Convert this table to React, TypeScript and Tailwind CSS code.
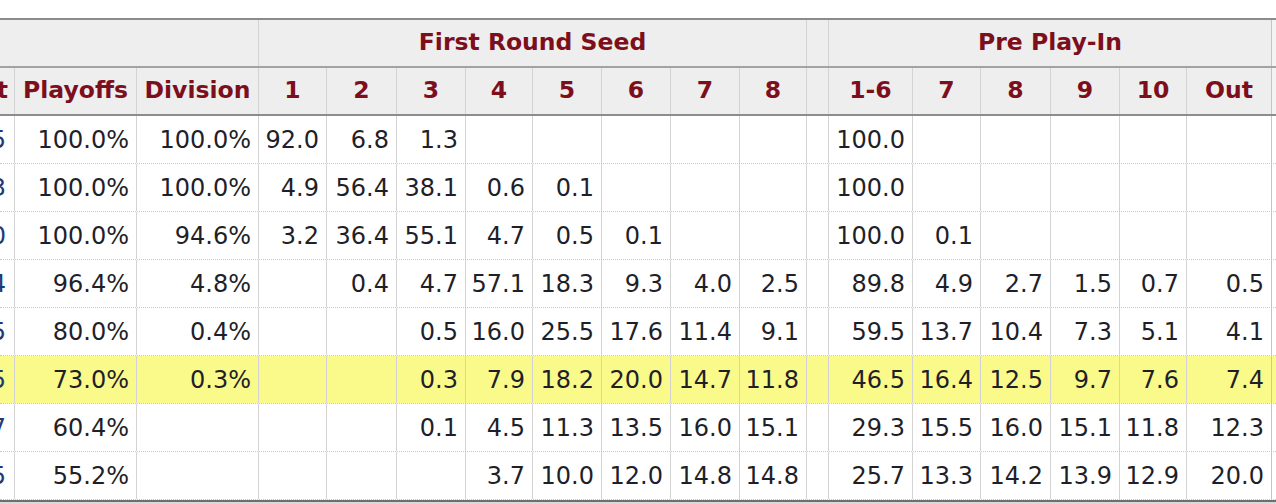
const seedCols = ["1", "2", "3", "4", "5", "6", "7", "8"];
const playInCols = ["1-6", "7", "8", "9", "10", "Out"];

const rows = [
  { w: "59.5", p: "100.0%", d: "100.0%", s: ["92.0", "6.8", "1.3", "", "", "", "", ""], pi: ["100.0", "", "", "", "", ""] },
  { w: "55.3", p: "100.0%", d: "100.0%", s: ["4.9", "56.4", "38.1", "0.6", "0.1", "", "", ""], pi: ["100.0", "", "", "", "", ""] },
  { w: "53.0", p: "100.0%", d: "94.6%", s: ["3.2", "36.4", "55.1", "4.7", "0.5", "0.1", "", ""], pi: ["100.0", "0.1", "", "", "", ""] },
  { w: "47.4", p: "96.4%", d: "4.8%", s: ["", "0.4", "4.7", "57.1", "18.3", "9.3", "4.0", "2.5"], pi: ["89.8", "4.9", "2.7", "1.5", "0.7", "0.5"] },
  { w: "44.5", p: "80.0%", d: "0.4%", s: ["", "", "0.5", "16.0", "25.5", "17.6", "11.4", "9.1"], pi: ["59.5", "13.7", "10.4", "7.3", "5.1", "4.1"] },
  { w: "43.5", p: "73.0%", d: "0.3%", s: ["", "", "0.3", "7.9", "18.2", "20.0", "14.7", "11.8"], pi: ["46.5", "16.4", "12.5", "9.7", "7.6", "7.4"], hl: true },
  { w: "41.7", p: "60.4%", d: "", s: ["", "", "0.1", "4.5", "11.3", "13.5", "16.0", "15.1"], pi: ["29.3", "15.5", "16.0", "15.1", "11.8", "12.3"] },
  { w: "40.5", p: "55.2%", d: "", s: ["", "", "", "3.7", "10.0", "12.0", "14.8", "14.8"], pi: ["25.7", "13.3", "14.2", "13.9", "12.9", "20.0"] },
];

const grid =
  "grid grid-cols-[14px_122px_122px_68px_70px_69px_67px_69px_69px_69px_67px_22px_84px_68px_70px_69px_67px_85px_1fr]";

function Num({ v, hl }: { v: string; hl?: boolean }) {
  return (
    <div
      className={`flex h-[47px] items-center justify-end border-l border-[#d3d3d3] pr-[7px] ${
        hl ? "bg-[#fafa8a]" : "bg-white"
      }`}
    >
      {v}
    </div>
  );
}

function Head({ label, first }: { label: string; first?: boolean }) {
  return (
    <div
      className={`flex h-[46px] items-center justify-center ${
        first ? "" : "border-l border-[#d3d3d3]"
      }`}
    >
      {label}
    </div>
  );
}

export default function App() {
  return (
    <div
      className="h-[504px] w-[1276px] overflow-hidden bg-white pt-[18px]"
      style={{ fontFamily: '"DejaVu Sans", Verdana, sans-serif' }}
    >
      <div className="border-t-2 border-[#8c8c8c]">
        {/* group header */}
        <div
          className={`${grid} border-b-2 border-[#a3a3a3] bg-[#eeeeee] text-[23.5px] font-bold text-[#7d0f1c]`}
        >
          <div className="col-span-3 h-[46px]" />
          <div className="col-span-8 flex h-[46px] items-center justify-center border-l border-[#d3d3d3]">
            First Round Seed
          </div>
          <div className="h-[46px] border-l border-[#d3d3d3]" />
          <div className="col-span-6 flex h-[46px] items-center justify-center border-l border-[#d3d3d3]">
            Pre Play-In
          </div>
          <div className="h-[46px] border-l border-[#c4c4c4] bg-[#f3f3f3]" />
        </div>

        {/* column header */}
        <div
          className={`${grid} border-b-2 border-[#8c8c8c] bg-[#eeeeee] text-[23.5px] font-bold text-[#7d0f1c]`}
        >
          <div className="flex h-[46px] items-center justify-end overflow-hidden pr-[6px]">
            <span className="whitespace-nowrap">Seat</span>
          </div>
          <Head label="Playoffs" />
          <Head label="Division" />
          {seedCols.map((c, i) => (
            <Head key={"s" + i} label={c} />
          ))}
          <Head label="" />
          {playInCols.map((c, i) => (
            <Head key={"p" + i} label={c} />
          ))}
          <div className="h-[46px] border-l border-[#c4c4c4] bg-[#f3f3f3]" />
        </div>

        {/* data */}
        {rows.map((r, idx) => (
          <div
            key={idx}
            className={`${grid} border-b border-dotted border-[#c8c8c8] text-[24px] text-[#1f1f29] last:border-b-0`}
          >
            <div
              className={`flex h-[47px] items-center justify-end overflow-hidden pr-[8px] text-[#1d3a78] ${
                r.hl ? "bg-[#fafa8a]" : "bg-white"
              }`}
            >
              <span className="whitespace-nowrap">{r.w}</span>
            </div>
            <Num v={r.p} hl={r.hl} />
            <Num v={r.d} hl={r.hl} />
            {r.s.map((v, i) => (
              <Num key={"s" + i} v={v} hl={r.hl} />
            ))}
            <Num v="" hl={r.hl} />
            {r.pi.map((v, i) => (
              <Num key={"p" + i} v={v} hl={r.hl} />
            ))}
            <div
              className={`h-[47px] border-l border-[#c4c4c4] ${
                r.hl ? "bg-[#fafa8a]" : "bg-white"
              }`}
            />
          </div>
        ))}
        <div className="h-[4px] border-t-2 border-[#6e6e6e] bg-[#d9d9d9]" />
      </div>
    </div>
  );
}
